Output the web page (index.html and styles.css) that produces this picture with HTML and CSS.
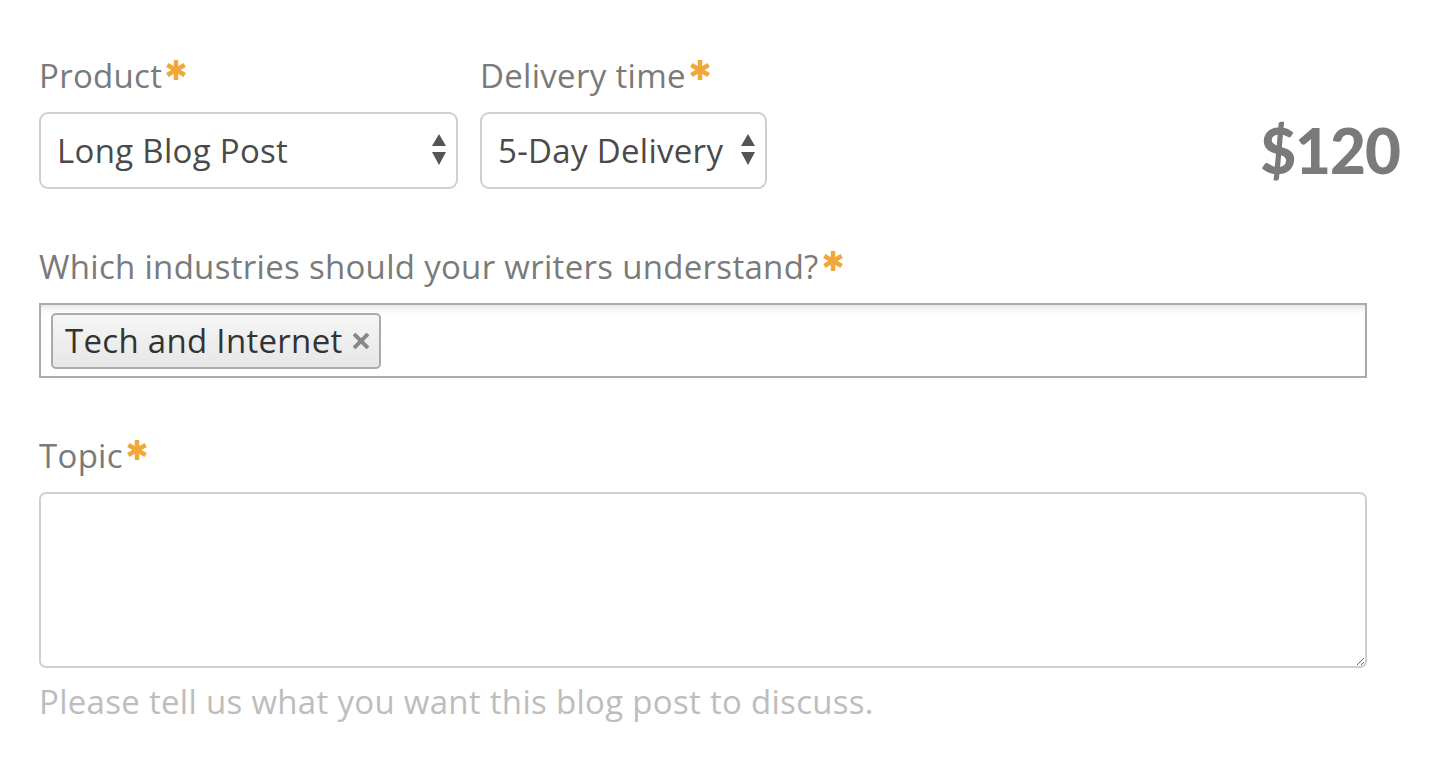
FILE: index.html
```html
<!DOCTYPE html>
<html lang="en">
<head>
    <meta charset="UTF-8">
    <title>Order form</title>
    <link rel="stylesheet" href="styles.css">
</head>
<body>
    <form class="order-form">
        <div class="row">
            <div class="field field-product">
                <label class="label">Product<svg class="req" width="20" height="20" viewBox="0 0 20 20"><g stroke="#f0a83a" stroke-width="4.5"><line x1="10" y1="0" x2="10" y2="20"/><line x1="1.3" y1="5" x2="18.7" y2="15"/><line x1="1.3" y1="15" x2="18.7" y2="5"/></g></svg></label>
                <div class="select-wrap">
                    <select class="select">
                        <option>Long Blog Post</option>
                    </select>
                    <svg class="arrows" width="14" height="31" viewBox="0 0 14 31">
                        <path d="M7 0 L14 12 L0 12 Z" fill="#555"/>
                        <path d="M0 18 L14 18 L7 31 Z" fill="#555"/>
                    </svg>
                </div>
            </div>
            <div class="field field-delivery">
                <label class="label">Delivery time<svg class="req" width="20" height="20" viewBox="0 0 20 20"><g stroke="#f0a83a" stroke-width="4.5"><line x1="10" y1="0" x2="10" y2="20"/><line x1="1.3" y1="5" x2="18.7" y2="15"/><line x1="1.3" y1="15" x2="18.7" y2="5"/></g></svg></label>
                <div class="select-wrap">
                    <select class="select">
                        <option>5-Day Delivery</option>
                    </select>
                    <svg class="arrows" width="14" height="31" viewBox="0 0 14 31">
                        <path d="M7 0 L14 12 L0 12 Z" fill="#555"/>
                        <path d="M0 18 L14 18 L7 31 Z" fill="#555"/>
                    </svg>
                </div>
            </div>
            <div class="price">$120</div>
        </div>

        <div class="field">
            <label class="label">Which industries should your writers understand?<svg class="req" width="20" height="20" viewBox="0 0 20 20"><g stroke="#f0a83a" stroke-width="4.5"><line x1="10" y1="0" x2="10" y2="20"/><line x1="1.3" y1="5" x2="18.7" y2="15"/><line x1="1.3" y1="15" x2="18.7" y2="5"/></g></svg></label>
            <div class="tags">
                <span class="tag">Tech and Internet
                    <svg class="tag-x" width="16" height="16" viewBox="0 0 16 16"><g stroke="#888" stroke-width="4"><line x1="1" y1="1" x2="15" y2="15"/><line x1="1" y1="15" x2="15" y2="1"/></g></svg>
                </span>
            </div>
        </div>

        <div class="field">
            <label class="label">Topic<svg class="req" width="20" height="20" viewBox="0 0 20 20"><g stroke="#f0a83a" stroke-width="4.5"><line x1="10" y1="0" x2="10" y2="20"/><line x1="1.3" y1="5" x2="18.7" y2="15"/><line x1="1.3" y1="15" x2="18.7" y2="5"/></g></svg></label>
            <textarea class="textarea"></textarea>
            <p class="help">Please tell us what you want this blog post to discuss.</p>
        </div>
    </form>
</body>
</html>
```

FILE: styles.css
```css
body {
    margin: 0;
    padding: 56px 79px 0 39px;
    font-family: 'Open Sans', sans-serif;
    background-color: #fff;
}

.order-form {
    display: flex;
    flex-direction: column;
    gap: 58px;
}

.row {
    display: flex;
    align-items: flex-end;
    gap: 22px;
}

.field {
    display: flex;
    flex-direction: column;
}

.label {
    font-size: 33px;
    color: #7a7a7a;
    line-height: 40px;
    margin-bottom: 16px;
    letter-spacing: 0.3px;
}

.req {
    vertical-align: top;
    margin-top: 4px;
    margin-left: 4px;
}

.select-wrap {
    position: relative;
}

.select {
    appearance: none;
    -webkit-appearance: none;
    height: 77px;
    border: 2px solid #cfcfcf;
    border-radius: 9px;
    background-color: #fff;
    font-family: 'Open Sans', sans-serif;
    font-size: 33px;
    letter-spacing: 0.3px;
    color: #4a4a4a;
    padding: 0 30px 0 16px;
    outline: none;
}

.field-product .select {
    width: 419px;
}

.field-delivery .select {
    width: 287px;
}

.arrows {
    position: absolute;
    right: 12px;
    top: 22px;
    pointer-events: none;
}

.price {
    margin-left: auto;
    margin-right: -33px;
    font-family: 'Lato', sans-serif;
    font-size: 62px;
    font-weight: 900;
    color: #7a7a7a;
    line-height: 77px;
    letter-spacing: -1px;
}

.tags {
    height: 71px;
    border: 2px solid #aaa;
    box-shadow: inset 0 8px 8px -6px #ddd;
    display: flex;
    align-items: center;
    padding: 0 10px;
}

.tag {
    display: inline-flex;
    align-items: center;
    gap: 10px;
    height: 52px;
    padding: 0 10px 0 12px;
    border: 2px solid #aaa;
    border-radius: 5px;
    background: linear-gradient(#f6f6f6, #e6e6e6);
    font-size: 33px;
    letter-spacing: 0.3px;
    color: #333;
}

.textarea {
    height: 168px;
    border: 2px solid #cfcfcf;
    border-radius: 7px;
    resize: vertical;
    outline: none;
    font-family: 'Open Sans', sans-serif;
    font-size: 33px;
}

.help {
    margin: 11px 0 0;
    font-size: 33px;
    letter-spacing: 0.3px;
    color: #bdbdbd;
}
```
